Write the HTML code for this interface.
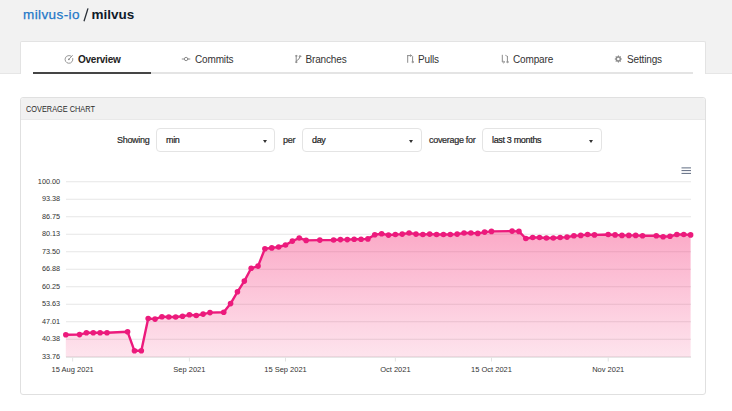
<!DOCTYPE html>
<html><head><meta charset="utf-8">
<style>
*{margin:0;padding:0;box-sizing:border-box}
html,body{width:732px;height:411px;overflow:hidden;background:#fff;font-family:"Liberation Sans",sans-serif}
.topbg{position:absolute;left:0;top:0;width:732px;height:74px;background:#f2f2f2;border-bottom:1px solid #e6e6e6}
.title{position:absolute;top:7px;font-size:13.5px;line-height:16px;white-space:nowrap}
.org{color:#1e78c8;letter-spacing:0.4px;-webkit-text-stroke:0.25px #1e78c8}
.sl{color:#2a3038;font-size:15px;top:4px}
.repo{color:#0f1a2a;font-weight:bold;letter-spacing:0px}
.tabs{position:absolute;left:20px;top:41px;width:686px;height:33px;background:#fff;border:1px solid #e3e3e3;border-bottom:none;border-radius:2px 2px 0 0}
.tabline{position:absolute;left:33px;top:72px;width:660px;height:2px;background:#e4e4e4}
.uline{position:absolute;left:33px;top:72px;width:118px;height:2px;background:#454545}
.tab{position:absolute;top:54px;font-size:10px;line-height:12px;color:#333;white-space:nowrap;letter-spacing:-0.15px}
.tab.b{font-weight:bold;color:#222;letter-spacing:-0.25px}
.ico{position:absolute}
.box{position:absolute;left:20px;top:97px;width:686px;height:298px;border:1px solid #e0e0e0;border-radius:3px;background:#fff}
.boxhd{position:absolute;left:0;top:0;width:684px;height:22px;background:#f1f1f1;border-bottom:1px solid #e9e9e9;border-radius:3px 3px 0 0}
.hdtxt{position:absolute;left:5px;top:6px;font-size:8.5px;line-height:10px;color:#2a2a2a;white-space:nowrap;transform:scaleX(0.865);transform-origin:0 0}
.lbl{position:absolute;top:135px;font-size:9px;line-height:11px;color:#2a2a2a;white-space:nowrap;letter-spacing:-0.3px;-webkit-text-stroke:0.2px #2a2a2a}
.sel{position:absolute;top:128px;height:23.5px;border:1px solid #e4e4e4;border-radius:4px;background:#fff}
.sel span{position:absolute;left:9px;top:5.5px;font-size:9px;line-height:11px;color:#222;white-space:nowrap;letter-spacing:-0.33px;-webkit-text-stroke:0.2px #222}
.sel i{position:absolute;top:10.5px;width:0;height:0;border-left:2.5px solid transparent;border-right:2.5px solid transparent;border-top:3px solid #333}
svg{position:absolute;left:0;top:0}
</style></head><body>
<div class="topbg"></div>
<div class="title org" style="left:23px">milvus-io</div><svg width="732" height="30" style="position:absolute;left:0;top:0"><line x1="88" y1="8.4" x2="84" y2="21.2" stroke="#2a3038" stroke-width="1.3"/></svg><div class="title repo" style="left:91.5px">milvus</div>
<div class="tabs"></div>
<div class="tabline"></div>
<div class="uline"></div>
<svg width="732" height="80" style="position:absolute;left:0;top:0" fill="none" stroke="#8c8c8c" stroke-width="0.9" stroke-linecap="round">
<path d="M71.4,56.3 A3.9,3.9 0 1 0 72.8,58.5"/><path d="M68.7,59.5 L72.4,55.5" stroke-width="0.9"/><circle cx="68.9" cy="59.3" r="0.9" fill="#8c8c8c" stroke="none"/>
<circle cx="186.1" cy="59" r="1.7" stroke-width="1"/><path d="M182.2,59 H184.3 M187.9,59 H189.9" stroke-width="1"/>
<path d="M296.2,55.6 V62.4" stroke-width="1"/><path d="M296.4,61 Q299.8,59.5 300.0,56.5" stroke-width="1"/><circle cx="300" cy="56.3" r="0.8"/><circle cx="296.2" cy="55.9" r="0.6"/><circle cx="296.2" cy="62.1" r="0.6"/>
<path d="M407.7,62.4 V55.5 M407.7,55.6 H411.8 L412.6,56.4 V61.4" stroke-width="1"/><path d="M410.4,54.7 L411.4,55.6 L410.4,56.5" stroke-width="0.8"/><circle cx="412.6" cy="62" r="0.7"/>
<path d="M502.3,55.2 V62 H504.4" stroke-width="1"/><path d="M503.6,61 L504.6,62 L503.6,63" stroke-width="0.8"/><path d="M507.4,56.4 V61.4" stroke-width="1"/><path d="M505.6,55.4 L507.2,56.2" stroke-width="0.8"/><circle cx="507.4" cy="62" r="0.7"/>
<g transform="translate(618.3,59)"><path d="M0,-3.9 L0.9,-2.4 L2.75,-2.75 L2.4,-0.9 L3.9,0 L2.4,0.9 L2.75,2.75 L0.9,2.4 L0,3.9 L-0.9,2.4 L-2.75,2.75 L-2.4,0.9 L-3.9,0 L-2.4,-0.9 L-2.75,-2.75 L-0.9,-2.4 Z" fill="#8c8c8c" stroke="none"/><circle r="1.3" fill="#fff" stroke="none"/></g>
</svg>
<div class="tab b" style="left:78px">Overview</div>
<div class="tab" style="left:195px">Commits</div>
<div class="tab" style="left:305.5px">Branches</div>
<div class="tab" style="left:418px">Pulls</div>
<div class="tab" style="left:513px">Compare</div>
<div class="tab" style="left:627px">Settings</div>
<div class="box"><div class="boxhd"><div class="hdtxt">COVERAGE CHART</div></div></div>
<div class="lbl" style="left:117px">Showing</div>
<div class="sel" style="left:156px;width:119px"><span>min</span><i style="left:106px"></i></div>
<div class="lbl" style="left:283px">per</div>
<div class="sel" style="left:302px;width:120px"><span>day</span><i style="left:106px"></i></div>
<div class="lbl" style="left:429px">coverage for</div>
<div class="sel" style="left:482px;width:120px"><span>last 3 months</span><i style="left:106px"></i></div>
<svg width="732" height="411" viewBox="0 0 732 411">
<defs><linearGradient id="g" x1="0" y1="0" x2="0" y2="1">
<stop offset="0" stop-color="#f41f6c" stop-opacity="0.38"/>
<stop offset="1" stop-color="#f41f6c" stop-opacity="0.12"/>
</linearGradient></defs>
<g stroke="#e6e6e6" stroke-width="1"><line x1="66" x2="691" y1="181.75" y2="181.75"/><line x1="66" x2="691" y1="199.25" y2="199.25"/><line x1="66" x2="691" y1="216.75" y2="216.75"/><line x1="66" x2="691" y1="234.25" y2="234.25"/><line x1="66" x2="691" y1="251.75" y2="251.75"/><line x1="66" x2="691" y1="269.25" y2="269.25"/><line x1="66" x2="691" y1="286.75" y2="286.75"/><line x1="66" x2="691" y1="304.25" y2="304.25"/><line x1="66" x2="691" y1="321.75" y2="321.75"/><line x1="66" x2="691" y1="339.25" y2="339.25"/><line x1="66" x2="691" y1="356.75" y2="356.75"/></g>
<path d="M65.80,357 L65.80,334.70 L79.53,334.60 L86.40,332.80 L93.26,332.80 L100.13,332.80 L107.00,332.80 L127.59,331.80 L134.46,350.80 L141.33,350.80 L148.19,318.50 L155.06,319.10 L161.92,316.70 L168.79,317.00 L175.66,317.00 L182.52,316.30 L189.39,314.80 L196.25,315.50 L203.12,314.10 L209.99,312.60 L223.72,312.20 L230.58,303.60 L237.45,291.80 L244.32,281.10 L251.18,268.30 L258.05,266.10 L264.91,248.70 L271.78,247.90 L278.65,247.00 L285.51,245.00 L292.38,241.10 L299.24,238.00 L306.11,240.40 L319.84,240.10 L333.57,240.00 L340.44,239.60 L347.31,239.60 L354.17,239.30 L361.04,239.20 L367.90,238.90 L374.77,234.80 L381.64,233.70 L388.50,235.10 L395.37,234.50 L402.23,234.10 L409.10,233.00 L415.97,234.10 L422.83,234.50 L429.70,234.10 L436.56,234.50 L443.43,234.50 L450.30,234.50 L457.16,234.10 L464.03,233.00 L470.89,233.00 L477.76,233.40 L484.63,232.10 L491.49,231.40 L512.09,231.10 L518.96,231.40 L525.82,238.50 L532.69,237.50 L539.55,237.50 L546.42,238.00 L553.29,238.00 L560.15,237.50 L567.02,237.10 L573.88,235.80 L580.75,235.40 L587.62,234.50 L594.48,234.90 L608.21,234.50 L615.08,234.90 L621.95,235.40 L628.81,235.40 L635.68,235.40 L642.54,235.80 L656.28,235.80 L663.14,236.70 L670.01,236.30 L676.87,234.50 L683.74,234.50 L690.61,234.90 L690.61,357 Z" fill="url(#g)"/>
<g stroke="#e3e3e3" stroke-width="1"><line x1="72.67" x2="72.67" y1="357" y2="361.5"/><line x1="189.39" x2="189.39" y1="357" y2="361.5"/><line x1="285.51" x2="285.51" y1="357" y2="361.5"/><line x1="395.37" x2="395.37" y1="357" y2="361.5"/><line x1="491.49" x2="491.49" y1="357" y2="361.5"/><line x1="608.21" x2="608.21" y1="357" y2="361.5"/><line x1="66" x2="691" y1="357.4" y2="357.4"/></g>
<polyline points="65.80,334.70 79.53,334.60 86.40,332.80 93.26,332.80 100.13,332.80 107.00,332.80 127.59,331.80 134.46,350.80 141.33,350.80 148.19,318.50 155.06,319.10 161.92,316.70 168.79,317.00 175.66,317.00 182.52,316.30 189.39,314.80 196.25,315.50 203.12,314.10 209.99,312.60 223.72,312.20 230.58,303.60 237.45,291.80 244.32,281.10 251.18,268.30 258.05,266.10 264.91,248.70 271.78,247.90 278.65,247.00 285.51,245.00 292.38,241.10 299.24,238.00 306.11,240.40 319.84,240.10 333.57,240.00 340.44,239.60 347.31,239.60 354.17,239.30 361.04,239.20 367.90,238.90 374.77,234.80 381.64,233.70 388.50,235.10 395.37,234.50 402.23,234.10 409.10,233.00 415.97,234.10 422.83,234.50 429.70,234.10 436.56,234.50 443.43,234.50 450.30,234.50 457.16,234.10 464.03,233.00 470.89,233.00 477.76,233.40 484.63,232.10 491.49,231.40 512.09,231.10 518.96,231.40 525.82,238.50 532.69,237.50 539.55,237.50 546.42,238.00 553.29,238.00 560.15,237.50 567.02,237.10 573.88,235.80 580.75,235.40 587.62,234.50 594.48,234.90 608.21,234.50 615.08,234.90 621.95,235.40 628.81,235.40 635.68,235.40 642.54,235.80 656.28,235.80 663.14,236.70 670.01,236.30 676.87,234.50 683.74,234.50 690.61,234.90" fill="none" stroke="#ec1a7c" stroke-width="2.4" stroke-linejoin="round"/>
<g fill="#ec1a7c"><circle cx="65.80" cy="334.70" r="2.8"/><circle cx="79.53" cy="334.60" r="2.8"/><circle cx="86.40" cy="332.80" r="2.8"/><circle cx="93.26" cy="332.80" r="2.8"/><circle cx="100.13" cy="332.80" r="2.8"/><circle cx="107.00" cy="332.80" r="2.8"/><circle cx="127.59" cy="331.80" r="2.8"/><circle cx="134.46" cy="350.80" r="2.8"/><circle cx="141.33" cy="350.80" r="2.8"/><circle cx="148.19" cy="318.50" r="2.8"/><circle cx="155.06" cy="319.10" r="2.8"/><circle cx="161.92" cy="316.70" r="2.8"/><circle cx="168.79" cy="317.00" r="2.8"/><circle cx="175.66" cy="317.00" r="2.8"/><circle cx="182.52" cy="316.30" r="2.8"/><circle cx="189.39" cy="314.80" r="2.8"/><circle cx="196.25" cy="315.50" r="2.8"/><circle cx="203.12" cy="314.10" r="2.8"/><circle cx="209.99" cy="312.60" r="2.8"/><circle cx="223.72" cy="312.20" r="2.8"/><circle cx="230.58" cy="303.60" r="2.8"/><circle cx="237.45" cy="291.80" r="2.8"/><circle cx="244.32" cy="281.10" r="2.8"/><circle cx="251.18" cy="268.30" r="2.8"/><circle cx="258.05" cy="266.10" r="2.8"/><circle cx="264.91" cy="248.70" r="2.8"/><circle cx="271.78" cy="247.90" r="2.8"/><circle cx="278.65" cy="247.00" r="2.8"/><circle cx="285.51" cy="245.00" r="2.8"/><circle cx="292.38" cy="241.10" r="2.8"/><circle cx="299.24" cy="238.00" r="2.8"/><circle cx="306.11" cy="240.40" r="2.8"/><circle cx="319.84" cy="240.10" r="2.8"/><circle cx="333.57" cy="240.00" r="2.8"/><circle cx="340.44" cy="239.60" r="2.8"/><circle cx="347.31" cy="239.60" r="2.8"/><circle cx="354.17" cy="239.30" r="2.8"/><circle cx="361.04" cy="239.20" r="2.8"/><circle cx="367.90" cy="238.90" r="2.8"/><circle cx="374.77" cy="234.80" r="2.8"/><circle cx="381.64" cy="233.70" r="2.8"/><circle cx="388.50" cy="235.10" r="2.8"/><circle cx="395.37" cy="234.50" r="2.8"/><circle cx="402.23" cy="234.10" r="2.8"/><circle cx="409.10" cy="233.00" r="2.8"/><circle cx="415.97" cy="234.10" r="2.8"/><circle cx="422.83" cy="234.50" r="2.8"/><circle cx="429.70" cy="234.10" r="2.8"/><circle cx="436.56" cy="234.50" r="2.8"/><circle cx="443.43" cy="234.50" r="2.8"/><circle cx="450.30" cy="234.50" r="2.8"/><circle cx="457.16" cy="234.10" r="2.8"/><circle cx="464.03" cy="233.00" r="2.8"/><circle cx="470.89" cy="233.00" r="2.8"/><circle cx="477.76" cy="233.40" r="2.8"/><circle cx="484.63" cy="232.10" r="2.8"/><circle cx="491.49" cy="231.40" r="2.8"/><circle cx="512.09" cy="231.10" r="2.8"/><circle cx="518.96" cy="231.40" r="2.8"/><circle cx="525.82" cy="238.50" r="2.8"/><circle cx="532.69" cy="237.50" r="2.8"/><circle cx="539.55" cy="237.50" r="2.8"/><circle cx="546.42" cy="238.00" r="2.8"/><circle cx="553.29" cy="238.00" r="2.8"/><circle cx="560.15" cy="237.50" r="2.8"/><circle cx="567.02" cy="237.10" r="2.8"/><circle cx="573.88" cy="235.80" r="2.8"/><circle cx="580.75" cy="235.40" r="2.8"/><circle cx="587.62" cy="234.50" r="2.8"/><circle cx="594.48" cy="234.90" r="2.8"/><circle cx="608.21" cy="234.50" r="2.8"/><circle cx="615.08" cy="234.90" r="2.8"/><circle cx="621.95" cy="235.40" r="2.8"/><circle cx="628.81" cy="235.40" r="2.8"/><circle cx="635.68" cy="235.40" r="2.8"/><circle cx="642.54" cy="235.80" r="2.8"/><circle cx="656.28" cy="235.80" r="2.8"/><circle cx="663.14" cy="236.70" r="2.8"/><circle cx="670.01" cy="236.30" r="2.8"/><circle cx="676.87" cy="234.50" r="2.8"/><circle cx="683.74" cy="234.50" r="2.8"/><circle cx="690.61" cy="234.90" r="2.8"/></g>
<g font-family="Liberation Sans" font-size="7.3" fill="#333" text-anchor="end"><text x="60.2" y="183.55">100.00</text><text x="60.2" y="201.05">93.38</text><text x="60.2" y="218.55">86.75</text><text x="60.2" y="236.05">80.13</text><text x="60.2" y="253.55">73.50</text><text x="60.2" y="271.05">66.88</text><text x="60.2" y="288.55">60.25</text><text x="60.2" y="306.05">53.63</text><text x="60.2" y="323.55">47.01</text><text x="60.2" y="341.05">40.38</text><text x="60.2" y="358.55">33.76</text></g>
<g font-family="Liberation Sans" font-size="7.5" fill="#333" text-anchor="middle"><text x="72.67" y="372">15 Aug 2021</text><text x="189.39" y="372">Sep 2021</text><text x="285.51" y="372">15 Sep 2021</text><text x="395.37" y="372">Oct 2021</text><text x="491.49" y="372">15 Oct 2021</text><text x="608.21" y="372">Nov 2021</text></g>
<g stroke="#5f6b80" stroke-width="1"><line x1="681.5" x2="691" y1="167.9" y2="167.9"/><line x1="681.5" x2="691" y1="170.6" y2="170.6"/><line x1="681.5" x2="691" y1="173.4" y2="173.4"/></g>
</svg>
</body></html>
